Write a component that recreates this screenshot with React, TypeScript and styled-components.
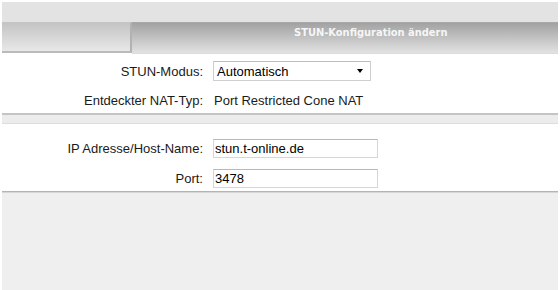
import React from "react";
import styled, { createGlobalStyle } from "styled-components";

const Global = createGlobalStyle`
  html, body { margin: 0; padding: 0; background: #ffffff; }
  body { font-family: "Liberation Sans", Arial, sans-serif; }
  * { box-sizing: border-box; }
`;

const Page = styled.div`
  width: 560px;
  height: 290px;
  padding: 2px 2px 0;
  display: flex;
  flex-direction: column;
  background: #ffffff;
`;

const TopStrip = styled.div`
  height: 20px;
  background: #e3e3e3;
`;

const TabBar = styled.div`
  height: 32px;
  display: flex;
`;

const Tab = styled.div<{ $active?: boolean }>`
  display: flex;
  align-items: flex-start;
  ${(p) =>
    p.$active
      ? `
    flex: 1;
    background: linear-gradient(#a2a2a2, #e2e2e2);
    border-top: 1px solid #a8a8a8;
    border-bottom: 1px solid #dcdcdc;
    padding: 3px 0 0 162px;
  `
      : `
    width: 130px;
    background: linear-gradient(#c4c4c4, #e8e8e8);
    border-top: 1px solid #c4c4c4;
    border-bottom: 2px solid #bababa;
    border-right: 2px solid #b2b2b2;
    height: 31px;
  `}
`;

const TabTitle = styled.span`
  font-family: "DejaVu Sans Condensed", "DejaVu Sans", sans-serif;
  font-weight: bold;
  font-size: 11px;
  color: #f6f6f6;
`;

const Section = styled.div<{ $top: number; $bottom: number; $gap: number }>`
  background: #ffffff;
  padding: ${(p) => p.$top}px 0 ${(p) => p.$bottom}px;
  display: flex;
  flex-direction: column;
  gap: ${(p) => p.$gap}px;
`;

const Row = styled.div`
  display: grid;
  grid-template-columns: 201px 1fr;
  column-gap: 10px;
  align-items: center;
  height: 20px;
  font-size: 13px;
  color: #1a1a1a;
`;

const Label = styled.div`
  text-align: right;
`;

const Value = styled.div`
  padding-left: 1px;
`;

const SelectBox = styled.div`
  width: 158px;
  height: 20px;
  border: 1px solid #cfcfcf;
  border-top-color: #bdbdbd;
  display: flex;
  align-items: center;
  justify-content: space-between;
  padding: 0 7px 0 3px;
  background: #fff;
  color: #000;
`;

const Arrow = styled.span`
  width: 0;
  height: 0;
  border-left: 3.5px solid transparent;
  border-right: 3.5px solid transparent;
  border-top: 4px solid #000;
`;

const Input = styled.div<{ $w: number }>`
  width: ${(p) => p.$w}px;
  height: 19px;
  border: 1px solid #d6d6d6;
  border-top-color: #b8b8b8;
  display: flex;
  align-items: center;
  padding-left: 1px;
  color: #000;
`;

const Divider = styled.div`
  height: 11px;
  background: #ececec;
  border-top: 2px solid #c4c4c4;
  border-bottom: 1px solid #dcdcdc;
`;

const Footer = styled.div`
  flex: 1;
  background: #efefef;
  border-top: 1px solid #b4b4b4;
  box-shadow: inset 0 1px 0 #d6d6d6;
`;

export default function App() {
  return (
    <>
      <Global />
      <Page>
        <TopStrip />
        <TabBar>
          <Tab />
          <Tab $active>
            <TabTitle>STUN-Konfiguration ändern</TabTitle>
          </Tab>
        </TabBar>
        <Section $top={7} $bottom={3} $gap={9}>
          <Row>
            <Label>STUN-Modus:</Label>
            <SelectBox>
              <span>Automatisch</span>
              <Arrow />
            </SelectBox>
          </Row>
          <Row>
            <Label>Entdeckter NAT-Typ:</Label>
            <Value>Port Restricted Cone NAT</Value>
          </Row>
        </Section>
        <Divider />
        <Section $top={14} $bottom={3} $gap={10}>
          <Row>
            <Label>IP Adresse/Host-Name:</Label>
            <Input $w={165}>stun.t-online.de</Input>
          </Row>
          <Row>
            <Label>Port:</Label>
            <Input $w={165}>3478</Input>
          </Row>
        </Section>
        <Footer />
      </Page>
    </>
  );
}
